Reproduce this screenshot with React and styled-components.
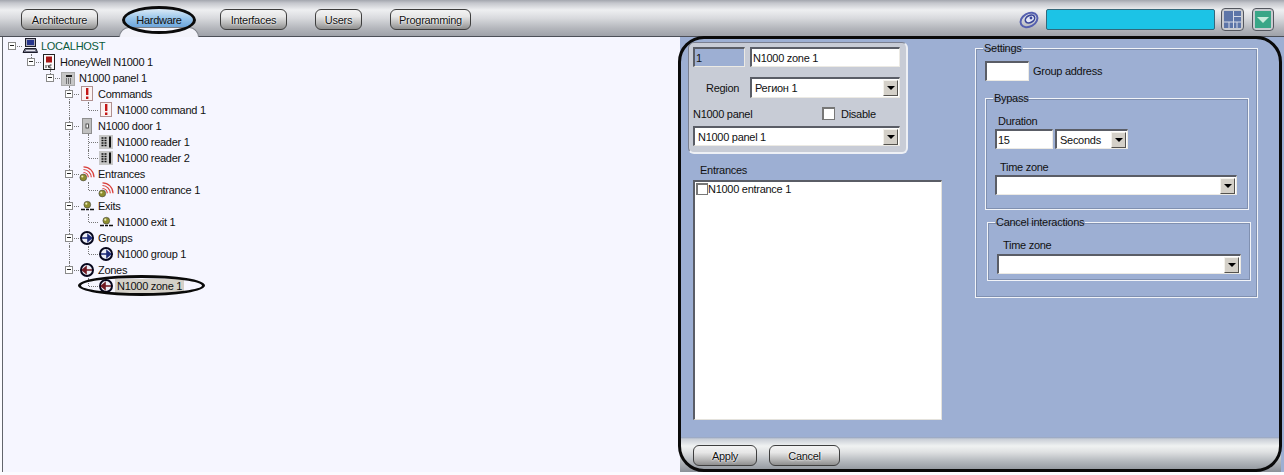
import React from 'react';
import styled, { createGlobalStyle } from 'styled-components';

const GlobalStyle = createGlobalStyle`
  html, body { margin: 0; padding: 0; background: #fbfbff; }
  body { font-family: "Liberation Sans", Arial, sans-serif; font-size: 11px; letter-spacing: -0.28px; color: #111; overflow: hidden; }
  * { box-sizing: border-box; }
`;

const Page = styled.div`
  width: 1284px;
  height: 475px;
  display: flex;
  flex-direction: column;
`;

const Toolbar = styled.div`
  height: 37px;
  flex: none;
  display: flex;
  align-items: flex-start;
  gap: 27px;
  padding: 9px 10px 0 21px;
  border-bottom: 1px solid #4c4f58;
  background: linear-gradient(#a3a6ae 0, #c4c6cc 3px, #eeeff1 10px, #d9dade 18px, #b5b7bd 28px, #9ea1a9 36px);
`;

const NavButton = styled.div`
  width: ${p => p.$w}px;
  height: 21px;
  margin-left: ${p => p.$ml || 0}px;
  display: flex;
  align-items: center;
  justify-content: center;
  border: 1px solid #3e3e3e;
  border-radius: 6px;
  text-shadow: 0 0 2px #fff, 0 0 2px #fff;
  background: linear-gradient(#f4f4f4 0, #e6e6e6 35%, #b9b9b9 70%, #8e8e8e 100%);
`;

const ActiveTab = styled(NavButton)`
  position: relative;
  border: 0;
  border-radius: 12px;
  background: linear-gradient(#dcebf8 0, #97c4ea 45%, #5f9bd6 100%);
  text-shadow: none;
  &::before {
    content: '';
    position: absolute;
    left: -6px;
    right: -6px;
    bottom: -8px;
    height: 10px;
    border: 1px solid #7d8088;
    border-bottom: 0;
    border-radius: 10px 10px 0 0;
    background: #f3f3fa;
    z-index: 0;
  }
  & > span { position: relative; z-index: 1; }
`;

const TabRing = styled.div`
  position: absolute;
  left: -3px;
  right: -3px;
  top: -3px;
  height: 28px;
  border: 3px solid #0a0a0a;
  border-radius: 50%;
  z-index: 2;
`;

const StatusGroup = styled.div`
  margin-left: auto;
  display: flex;
  align-items: center;
  height: 21px;
`;

const StatusBar = styled.div`
  width: 169px;
  height: 21px;
  margin: 0 6px 0 6px;
  background: #1cc3e6;
  border: 1px solid #32697c;
  border-radius: 2px;
`;

const SquareButton = styled.div`
  width: ${p => p.$w || 23}px;
  height: 23px;
  padding: 2px;
  margin-left: ${p => p.$ml || 0}px;
  border: 1px solid #53565e;
  border-radius: 4px;
  background: #c9cbd0;
  display: flex;
`;

const GreenFace = styled.div`
  flex: 1;
  display: flex;
  align-items: center;
  justify-content: center;
  background: #3aa687;
  &::after {
    content: '';
    border-left: 6px solid transparent;
    border-right: 6px solid transparent;
    border-top: 6px solid #c9ebdc;
  }
`;

const Main = styled.div`
  flex: 1;
  display: flex;
  min-height: 0;
`;

const TreePanel = styled.div`
  position: relative;
  width: 678px;
  flex: none;
  margin-left: 2px;
  padding-top: 1px;
  height: 435px;
  border-left: 1px solid #62656c;
  background: #f6f6ff;
`;

const Row = styled.div`
  display: flex;
  height: 16px;
  align-items: center;
`;

const Cell = styled.div`
  position: relative;
  width: 19px;
  height: 16px;
  flex: none;
  &::before {
    content: '';
    display: ${p => (p.$v ? 'block' : 'none')};
    position: absolute;
    left: 9px;
    top: 0;
    height: ${p => (p.$v === 'half' ? 8 : 16)}px;
    border-left: 1px dotted #777;
  }
  &::after {
    content: '';
    display: ${p => (p.$h ? 'block' : 'none')};
    position: absolute;
    left: 10px;
    top: 8px;
    width: 9px;
    border-top: 1px dotted #777;
  }
`;

const Expander = styled.div`
  position: absolute;
  left: 5px;
  top: 4px;
  width: 8px;
  height: 8px;
  border: 1px solid #8a8a8a;
  background: #fff;
  z-index: 1;
  &::after {
    content: '';
    position: absolute;
    left: 1px;
    top: 2px;
    width: 4px;
    height: 1px;
    background: #222;
  }
`;

const IconSlot = styled.div`
  width: 16px;
  height: 16px;
  flex: none;
  display: flex;
  align-items: center;
  justify-content: center;
`;

const NodeLabel = styled.span`
  margin-left: ${p => (p.$selected ? 1 : 3)}px;
  padding: ${p => (p.$selected ? '0 2px' : 0)};
  line-height: ${p => (p.$selected ? 14 : 16)}px;
  color: ${p => p.$color || '#111'};
  background: ${p => (p.$selected ? '#d4d0c8' : 'transparent')};
  white-space: nowrap;
`;

const ZoneRing = styled.div`
  position: absolute;
  left: 75px;
  top: 238px;
  width: 127px;
  height: 21px;
  border: 3px solid #0a0a0a;
  border-radius: 50%;
`;

const RightPanel = styled.div`
  position: relative;
  flex: 1;
  display: flex;
  flex-direction: column;
  height: 435px;
  background: #9dafd3;
`;

const Frame = styled.div`
  position: absolute;
  left: -2px;
  right: 2px;
  top: -1px;
  bottom: 0;
  border: 3px solid #0a0a0a;
  border-radius: 26px;
  pointer-events: none;
  z-index: 3;
`;

const Content = styled.div`
  flex: 1;
  display: flex;
  padding: 5px 0 0 8px;
`;

const LeftColumn = styled.div`
  width: 287px;
  flex: none;
`;

const RightColumn = styled.div`
  padding-top: 6px;
`;

const TopGroup = styled.div`
  width: 220px;
  height: 112px;
  padding: 4px 5px 5px 4px;
  display: flex;
  flex-direction: column;
  border: 1px solid #7b8090;
  border-right: 2px solid #eef0f5;
  border-bottom: 2px solid #eef0f5;
  border-radius: 6px;
  background: #c8ccd6;
`;

const FormRow = styled.div`
  display: flex;
  align-items: center;
  margin-top: ${p => p.$mt || 0}px;
`;

const Field = styled.div`
  width: ${p => p.$w}px;
  height: ${p => p.$h || 20}px;
  flex: none;
  padding-left: 1px;
  display: flex;
  align-items: center;
  margin-left: ${p => p.$ml || 0}px;
  background: ${p => p.$bg || '#fff'};
  border-top: 2px solid #5a5d66;
  border-left: 2px solid #5a5d66;
  border-right: 1px solid #eceae4;
  border-bottom: 1px solid #eceae4;
`;

const ComboBox = styled(Field)`
  justify-content: space-between;
  padding-left: 3px;
  padding-right: 1px;
`;

const ArrowButton = styled.div`
  width: 15px;
  height: ${p => p.$h || 16}px;
  flex: none;
  display: flex;
  align-items: center;
  justify-content: center;
  background: #d4d0c8;
  border: 1px solid;
  border-color: #f4f2ec #55534e #55534e #f4f2ec;
  &::after {
    content: '';
    border-left: 4px solid transparent;
    border-right: 4px solid transparent;
    border-top: 4px solid #000;
  }
`;

const Caption = styled.span`
  width: ${p => (p.$w ? `${p.$w}px` : 'auto')};
  flex: none;
  margin-left: ${p => p.$ml || 0}px;
  white-space: nowrap;
`;

const CheckBox = styled.div`
  width: ${p => p.$size || 13}px;
  height: ${p => p.$size || 13}px;
  flex: none;
  background: #fff;
  border: 1px solid #777;
  border-top-width: 2px;
  border-left-width: 2px;
`;

const EntranceTitle = styled.div`
  margin: 10px 0 3px 12px;
  line-height: 13px;
`;

const ListBox = styled.div`
  width: 249px;
  height: 240px;
  margin-left: 5px;
  padding: 1px 1px;
  background: #fff;
  border-top: 2px solid #5a5d66;
  border-left: 2px solid #5a5d66;
  border-right: 1px solid #e4e2dc;
  border-bottom: 1px solid #e4e2dc;
  display: flex;
  align-items: flex-start;
`;

const GroupBox = styled.fieldset`
  width: ${p => p.$w}px;
  height: ${p => p.$h}px;
  margin: ${p => p.$m || 0};
  padding: ${p => p.$p || 0};
  border: 1px solid #f2f4f8;
  box-shadow: 0 0 0 1px #8090b0 inset;
  min-width: 0;
`;

const GroupTitle = styled.legend`
  padding: 0 1px;
  margin-left: -2px;
  line-height: 13px;
`;

const FieldLabel = styled.div`
  margin: ${p => p.$m || 0};
  line-height: 13px;
`;

const Footer = styled.div`
  height: 35px;
  flex: none;
  display: flex;
  align-items: flex-start;
  gap: 12px;
  padding: 8px 0 0 13px;
  margin-right: 3px;
  background: linear-gradient(#8f9fbf 0, #c9ced6 2px, #f0f2f2 9px, #dfe1e2 15px, #b5b9be 24px, #8b9097 35px);
`;

const ComputerIcon = () => (
  <svg width="16" height="16" viewBox="0 0 16 16">
    <rect x="3.5" y="0.5" width="10" height="8" fill="#a8a8b8" stroke="#1c1c2a" />
    <rect x="5" y="2" width="7" height="5" fill="#26348c" />
    <path d="M1 14.5 L3 10.5 H14 L15.5 14.5 Z" fill="#77778a" stroke="#1c1c2a" />
    <path d="M4 12.5 H13" stroke="#e4e4ec" />
  </svg>
);

const DeviceIcon = () => (
  <svg width="16" height="16" viewBox="0 0 16 16">
    <rect x="2.5" y="0.5" width="11" height="15" fill="#fafafa" stroke="#222" />
    <rect x="5" y="2.5" width="6" height="6" fill="#a81818" />
    <path d="M5 11 V14 M7 11 L8 14 M10.5 11 H8.8 V14 H10.5" stroke="#333" fill="none" />
  </svg>
);

const PanelIcon = () => (
  <svg width="16" height="16" viewBox="0 0 16 16">
    <rect x="1.5" y="2.5" width="13" height="13" fill="#c6c6c6" stroke="#aaa" />
    <rect x="6" y="5" width="6" height="2" fill="#222" />
    <path d="M6 9 H7 M8 9 H9 M10 9 H11 M6 11 H7 M8 11 H9 M10 11 H11 M6 13 H7 M8 13 H9 M10 13 H11" stroke="#222" />
  </svg>
);

const AlertIcon = () => (
  <svg width="16" height="16" viewBox="0 0 16 16">
    <rect x="2.5" y="0.5" width="11" height="14" fill="#fbf3f3" stroke="#b09090" />
    <rect x="7" y="2" width="2.4" height="7" fill="#c41616" />
    <rect x="7" y="10.5" width="2.4" height="2.5" fill="#c41616" />
  </svg>
);

const DoorIcon = () => (
  <svg width="16" height="16" viewBox="0 0 16 16">
    <rect x="3.5" y="0.5" width="9" height="15" fill="#c0c0c0" stroke="#8e8e8e" />
    <rect x="7" y="6" width="2.4" height="4" fill="#fff" stroke="#333" strokeWidth="0.8" />
  </svg>
);

const ReaderIcon = () => (
  <svg width="16" height="16" viewBox="0 0 16 16">
    <rect x="1" y="1" width="14" height="14" fill="#c8c8c8" />
    <path d="M3.5 4 H5.5 M6.5 4 H8.5 M3.5 6.5 H5.5 M6.5 6.5 H8.5 M3.5 9 H5.5 M6.5 9 H8.5 M3.5 11.5 H5.5 M6.5 11.5 H8.5" stroke="#111" strokeWidth="1.5" />
    <rect x="11" y="2.5" width="2" height="11" fill="#111" />
  </svg>
);

const Ball = ({ cx, cy }) => (
  <>
    <circle cx={cx} cy={cy} r="3.4" fill="#8d8d2e" stroke="#444" strokeWidth="0.6" />
    <circle cx={cx - 1} cy={cy - 1} r="1.1" fill="#ececb8" />
  </>
);

const EntranceIcon = () => (
  <svg width="16" height="16" viewBox="0 0 16 16">
    <path d="M4.5 6.5 A5 5 0 0 1 9.3 11.3 M4.5 3.5 A8 8 0 0 1 12.3 11.3 M4.5 0.8 A10.5 10.5 0 0 1 15 11.3" fill="none" stroke="#d9403c" strokeWidth="1.2" />
    <Ball cx="4.3" cy="11.5" />
  </svg>
);

const ExitIcon = () => (
  <svg width="16" height="16" viewBox="0 0 16 16">
    <Ball cx="8.3" cy="6.7" />
    <path d="M2 11.5 H6 M7 11.5 H10 M11 11.5 H15" stroke="#111" strokeWidth="1.5" />
  </svg>
);

const ArrowCircle = ({ left, color }) => (
  <svg width="16" height="16" viewBox="0 0 16 16">
    <circle cx="8" cy="8" r="6" fill="#eceef6" stroke="#06061c" strokeWidth="2" />
    {left ? (
      <path d="M13 8 H5 M7 5 L3.5 8 L7 11 Z" stroke={color} fill={color} strokeWidth="1.6" />
    ) : (
      <path d="M3 8 H11 M9 5 L12.5 8 L9 11 Z" stroke={color} fill={color} strokeWidth="1.6" />
    )}
  </svg>
);

const GroupIcon = () => <ArrowCircle color="#1c2a78" />;
const ZoneIcon = () => <ArrowCircle left color="#701820" />;

// cells: one entry per indent column, L line, T tee, E elbow, B box with line, H box half line, R root box
const nodes = [
  { cells: 'R', text: 'LOCALHOST', icon: ComputerIcon, color: '#0c5a3c' },
  { cells: ' H', text: 'HoneyWell N1000 1', icon: DeviceIcon },
  { cells: '  H', text: 'N1000 panel 1', icon: PanelIcon },
  { cells: '   B', text: 'Commands', icon: AlertIcon },
  { cells: '   LE', text: 'N1000 command 1', icon: AlertIcon },
  { cells: '   B', text: 'N1000 door 1', icon: DoorIcon },
  { cells: '   LT', text: 'N1000 reader 1', icon: ReaderIcon },
  { cells: '   LE', text: 'N1000 reader 2', icon: ReaderIcon },
  { cells: '   B', text: 'Entrances', icon: EntranceIcon },
  { cells: '   LE', text: 'N1000 entrance 1', icon: EntranceIcon },
  { cells: '   B', text: 'Exits', icon: ExitIcon },
  { cells: '   LE', text: 'N1000 exit 1', icon: ExitIcon },
  { cells: '   B', text: 'Groups', icon: GroupIcon },
  { cells: '   LE', text: 'N1000 group 1', icon: GroupIcon },
  { cells: '   H', text: 'Zones', icon: ZoneIcon },
  { cells: '    E', text: 'N1000 zone 1', icon: ZoneIcon, selected: true },
];

const cellProps = {
  ' ': {},
  L: { $v: 'full' },
  T: { $v: 'full', $h: true },
  E: { $v: 'half', $h: true },
  B: { $v: 'full', $h: true },
  H: { $v: 'half', $h: true },
  R: { $h: true },
};

function TreeNode({ node }) {
  const Icon = node.icon;
  return (
    <Row>
      {node.cells.split('').map((c, i) => (
        <Cell key={i} {...cellProps[c]}>
          {'BHR'.includes(c) && <Expander />}
        </Cell>
      ))}
      <IconSlot>
        <Icon />
      </IconSlot>
      <NodeLabel $color={node.color} $selected={node.selected}>
        {node.text}
      </NodeLabel>
    </Row>
  );
}

function Combo({ w, h, ml, children }) {
  return (
    <ComboBox $w={w} $h={h} $ml={ml}>
      <span>{children}</span>
      <ArrowButton />
    </ComboBox>
  );
}

export default function App() {
  return (
    <Page>
      <GlobalStyle />
      <Toolbar>
        <NavButton $w={77}>Architecture</NavButton>
        <ActiveTab $w={68}>
          <span>Hardware</span>
          <TabRing />
        </ActiveTab>
        <NavButton $w={67}>Interfaces</NavButton>
        <NavButton $w={47} $ml={1}>Users</NavButton>
        <NavButton $w={81} $ml={1}>Programming</NavButton>
        <StatusGroup>
          <svg width="22" height="20" viewBox="0 0 22 20">
            <ellipse cx="11" cy="10" rx="9" ry="6.5" transform="rotate(-30 11 10)" fill="none" stroke="#5560b0" strokeWidth="2" />
            <ellipse cx="12" cy="9" rx="5" ry="3.5" transform="rotate(-30 12 9)" fill="#e4e8f8" stroke="#3a4698" strokeWidth="1.6" />
            <circle cx="13" cy="8" r="1.4" fill="#3a4698" />
          </svg>
          <StatusBar />
          <SquareButton>
            <svg width="17" height="17" viewBox="0 0 17 17">
              <rect width="17" height="17" fill="#5d75a8" />
              <path d="M9.5 0 V17 M0 11 H17 M9.5 5.5 H17 M5 11 V17 M13 11 V17" stroke="#d5dae6" />
            </svg>
          </SquareButton>
          <SquareButton $ml={8} $w={22}>
            <GreenFace />
          </SquareButton>
        </StatusGroup>
      </Toolbar>
      <Main>
        <TreePanel>
          {nodes.map(node => (
            <TreeNode key={node.text + node.cells} node={node} />
          ))}
          <ZoneRing />
        </TreePanel>
        <RightPanel>
          <Content>
            <LeftColumn>
              <TopGroup>
                <FormRow>
                  <Field $w={52} $bg="#9dafd3">1</Field>
                  <Field $w={150} $ml={5}>N1000 zone 1</Field>
                </FormRow>
                <FormRow $mt={10}>
                  <Caption $ml={13} $w={44}>Region</Caption>
                  <Combo w={150} h={21}>Регион 1</Combo>
                </FormRow>
                <FormRow $mt={9}>
                  <Caption $w={129}>N1000 panel</Caption>
                  <CheckBox />
                  <Caption $ml={6}>Disable</Caption>
                </FormRow>
                <FormRow $mt={6}>
                  <Combo w={207} h={20}>N1000 panel 1</Combo>
                </FormRow>
              </TopGroup>
              <EntranceTitle>Entrances</EntranceTitle>
              <ListBox>
                <CheckBox $size={12} />
                <span>N1000 entrance 1</span>
              </ListBox>
            </LeftColumn>
            <RightColumn>
              <GroupBox $w={283} $h={256} $p="6px 9px 0 9px" $m="-6px 0 0 0">
                <GroupTitle>Settings</GroupTitle>
                <FormRow>
                  <Field $w={44} $h={20} />
                  <Caption $ml={4}>Group address</Caption>
                </FormRow>
                <GroupBox $w={264} $h={118} $p="0 9px" $m="11px 0 0 0">
                  <GroupTitle>Bypass</GroupTitle>
                  <FieldLabel $m="10px 0 1px 3px">Duration</FieldLabel>
                  <FormRow>
                    <Field $w={58} $h={20}>15</Field>
                    <Combo w={73} h={20} ml={2}>Seconds</Combo>
                  </FormRow>
                  <FieldLabel $m="12px 0 1px 5px">Time zone</FieldLabel>
                  <Combo w={242} h={20} />
                </GroupBox>
                <GroupBox $w={264} $h={65} $p="0 9px" $m="6px 0 0 2px">
                  <GroupTitle>Cancel interactions</GroupTitle>
                  <FieldLabel $m="10px 0 2px 6px">Time zone</FieldLabel>
                  <Combo w={244} h={20} />
                </GroupBox>
              </GroupBox>
            </RightColumn>
          </Content>
          <Footer>
            <NavButton $w={64}>Apply</NavButton>
            <NavButton $w={71}>Cancel</NavButton>
          </Footer>
          <Frame />
        </RightPanel>
      </Main>
    </Page>
  );
}
